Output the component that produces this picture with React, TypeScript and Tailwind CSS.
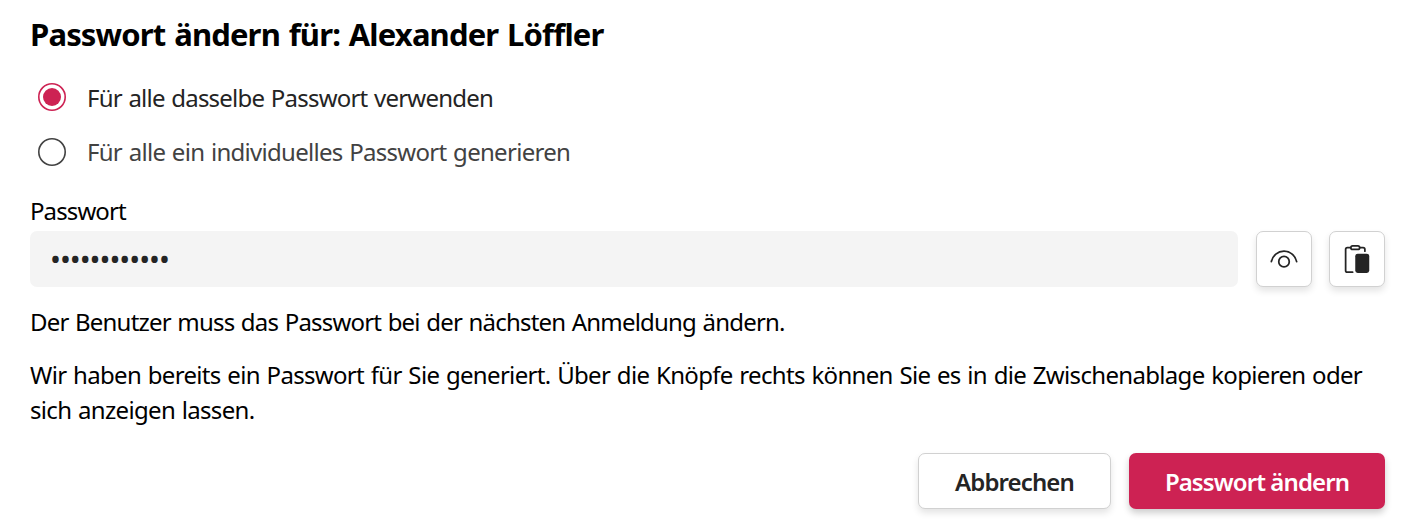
import { useState } from 'react';

const iconButton =
  'flex size-14 items-center justify-center rounded-[7px] border border-[#d1d1d1] bg-white text-[#242424] shadow-[0_4px_7px_rgba(0,0,0,0.11)]';

function EyeIcon() {
  return (
    <svg width="36" height="36" viewBox="-0.286 -0.286 20.571 20.571" fill="currentColor" className="shrink-0">
      <path d="M3.26 11.6A6.97 6.97 0 0 1 10 6c3.2 0 6.06 2.33 6.74 5.6a.5.5 0 0 0 .98-.2A7.97 7.97 0 0 0 10 5a7.97 7.97 0 0 0-7.72 6.4.5.5 0 0 0 .98.2ZM10 8a3.5 3.5 0 1 0 0 7 3.5 3.5 0 0 0 0-7Zm-2.5 3.5a2.5 2.5 0 1 1 5 0 2.5 2.5 0 0 1-5 0Z" />
    </svg>
  );
}

function PasteIcon() {
  return (
    <svg width="36" height="36" viewBox="-0.286 -0.286 20.571 20.571" fill="none" stroke="currentColor" strokeLinecap="round" className="shrink-0">
      <path d="M6.2 3.5H4.5a1 1 0 0 0-1 1v12a1 1 0 0 0 1 1h3" />
      <path d="M11.8 3.5h1.7a1 1 0 0 1 1 1v1" />
      <rect x="6.5" y="2.5" width="5" height="2" rx="1" />
      <rect x="9" y="7" width="8" height="11" rx="1.4" fill="currentColor" stroke="none" />
    </svg>
  );
}

function Radio({ label, checked, onSelect }: { label: string; checked: boolean; onSelect: () => void }) {
  return (
    <button
      type="button"
      role="radio"
      aria-checked={checked}
      onClick={onSelect}
      className={`flex h-[54px] items-center gap-[21px] pl-2 ${checked ? 'text-[#242424]' : 'text-[#424242]'}`}
    >
      <svg width="28" height="28" viewBox="0 0 28 28" className={checked ? 'text-[#cd2253]' : 'mt-[2px] text-[#424242]'}>
        <circle cx="14" cy="14" r="13.2" fill="none" stroke="currentColor" strokeWidth="1.6" />
        {checked && <circle cx="14" cy="14" r="9" fill="currentColor" />}
      </svg>
      <span className={`whitespace-nowrap [word-spacing:1.1px] ${checked ? 'tracking-[-0.78px]' : 'tracking-[-0.71px]'}`}>
        {label}
      </span>
    </button>
  );
}

export default function App() {
  const [shared, setShared] = useState(true);

  return (
    <main className="h-[522px] w-[1418px] overflow-hidden bg-white pr-[33px] pl-[30px] font-['Noto_Sans','Open_Sans',sans-serif] text-[24px] leading-[35px] text-black">
      <h1 className="pt-[13px] text-[31px] leading-[42px] font-bold tracking-[-0.84px] whitespace-nowrap [word-spacing:1.5px]">
        Passwort ändern für: Alexander Löffler
      </h1>
      <div role="radiogroup" className="mt-[15px] flex flex-col">
        <Radio label="Für alle dasselbe Passwort verwenden" checked={shared} onSelect={() => setShared(true)} />
        <Radio label="Für alle ein individuelles Passwort generieren" checked={!shared} onSelect={() => setShared(false)} />
      </div>
      <div className="mt-[15px] tracking-[-0.9px]">Passwort</div>
      <div className="mt-[3px] flex">
        <div className="flex h-14 flex-1 items-center rounded-[7px] bg-[#f4f4f4] pl-[20px] text-[#242424]">
          <span className="-mt-[2px] text-[29px] tracking-[-1px]">••••••••••••</span>
        </div>
        <button type="button" aria-label="Passwort anzeigen" className={`${iconButton} ml-[18px]`}>
          <EyeIcon />
        </button>
        <button type="button" aria-label="Passwort kopieren" className={`${iconButton} ml-[17px]`}>
          <PasteIcon />
        </button>
      </div>
      <p className="mt-[17px] tracking-[-0.81px] whitespace-nowrap [word-spacing:1.1px]">
        Der Benutzer muss das Passwort bei der nächsten Anmeldung ändern.
      </p>
      <p className="mt-[18px] tracking-[-0.675px] whitespace-nowrap [word-spacing:1.1px]">
        Wir haben bereits ein Passwort für Sie generiert. Über die Knöpfe rechts können Sie es in die Zwischenablage kopieren oder
        <br />
        sich anzeigen lassen.
      </p>
      <div className="mt-[26px] flex justify-end gap-[18px] font-semibold tracking-[-0.9px] whitespace-nowrap">
        <button type="button" className="h-14 w-[193px] rounded-[7px] border border-[#d1d1d1] bg-white text-[#242424] shadow-[0_4px_7px_rgba(0,0,0,0.11)]">
          Abbrechen
        </button>
        <button type="button" className="h-14 w-[256px] rounded-[7px] bg-[#cd2253] text-white shadow-[0_4px_7px_rgba(0,0,0,0.2)]">
          Passwort ändern
        </button>
      </div>
    </main>
  );
}
